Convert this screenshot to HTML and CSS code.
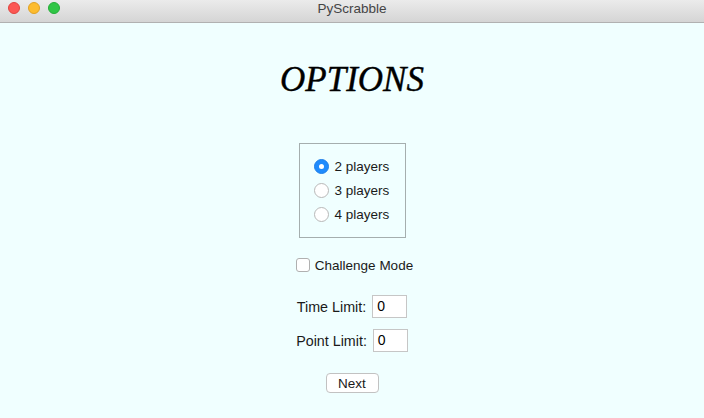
FILE: index.html
```html
<!DOCTYPE html>
<html>
<head>
<meta charset="utf-8">
<title>PyScrabble</title>
<link rel="stylesheet" href="styles.css">
</head>
<body>
<div class="titlebar">
  <div class="lights">
    <span class="light red"></span>
    <span class="light yellow"></span>
    <span class="light green"></span>
  </div>
  <div class="wintitle">PyScrabble</div>
</div>
<main class="content">
  <h1 class="heading">OPTIONS</h1>
  <div class="frame">
    <label class="radio-row"><span class="radio checked"></span><span>2 players</span></label>
    <label class="radio-row"><span class="radio"></span><span>3 players</span></label>
    <label class="radio-row"><span class="radio"></span><span>4 players</span></label>
  </div>
  <label class="check-row"><span class="checkbox"></span><span>Challenge Mode</span></label>
  <div class="field-row first"><span class="field-label">Time Limit:</span><span class="entry">0</span></div>
  <div class="field-row"><span class="field-label">Point Limit:</span><span class="entry">0</span></div>
  <button class="btn">Next</button>
</main>
</body>
</html>
```

FILE: styles.css
```css
html, body {
  margin: 0;
  padding: 0;
}
body {
  width: 704px;
  height: 418px;
  background: #f0ffff;
  font-family: "Liberation Sans", Arial, sans-serif;
  font-size: 13px;
  color: #1a1a1a;
  overflow: hidden;
}
.titlebar {
  height: 22px;
  background: linear-gradient(#ebebeb, #d5d5d5);
  border-bottom: 1px solid #b1b1b1;
  display: flex;
  align-items: center;
  justify-content: center;
  position: relative;
}
.lights {
  position: absolute;
  left: 8px;
  top: 2px;
  display: flex;
  gap: 8px;
}
.light {
  width: 12px;
  height: 12px;
  box-sizing: border-box;
  border-radius: 50%;
  display: block;
}
.red { background: #fc5753; border: 1px solid #e0443f; }
.yellow { background: #fdbc2e; border: 1px solid #e0a224; }
.green { background: #30c646; border: 1px solid #25ad38; }
.wintitle {
  color: #444;
  font-size: 13.5px;
  margin-top: -6px;
}
.content {
  display: flex;
  flex-direction: column;
  align-items: center;
}
.heading {
  margin: 37px 0 0;
  font-family: "Liberation Serif", "Times New Roman", serif;
  font-style: italic;
  font-weight: normal;
  font-size: 35px;
  line-height: 40px;
  color: #000;
  -webkit-text-stroke: 0.4px #000;
}
.frame {
  margin-top: 43px;
  width: 91px;
  height: 72px;
  padding: 10px 0 11px 14px;
  border: 1px solid #a5aeae;
  display: flex;
  flex-direction: column;
  font-size: 13.5px;
}
.radio-row {
  height: 24px;
  display: flex;
  align-items: center;
  gap: 6px;
}
.radio {
  width: 13px;
  height: 13px;
  border-radius: 50%;
  border: 1px solid #b8b8b8;
  background: #fff;
  display: block;
  position: relative;
}
.radio.checked {
  background: #1f8bfd;
  border-color: #1f7fe8;
}
.radio.checked::after {
  content: "";
  position: absolute;
  left: 4px;
  top: 4px;
  width: 5px;
  height: 5px;
  border-radius: 50%;
  background: #fff;
}
.check-row {
  margin-top: 18px;
  height: 18px;
  display: flex;
  align-items: center;
  gap: 5px;
  margin-left: 5px;
  font-size: 13.5px;
}
.checkbox {
  width: 12px;
  height: 12px;
  border: 1px solid #b0b0b0;
  border-radius: 3px;
  background: #fff;
  display: block;
}
.field-row {
  margin-top: 11px;
  display: flex;
  align-items: center;
  gap: 6px;
}
.field-row.first {
  margin-top: 21px;
}
.field-label {
  font-size: 14.3px;
}
.entry {
  width: 29px;
  height: 21px;
  border: 1px solid #c6c6c6;
  background: #fff;
  padding-left: 4px;
  line-height: 21px;
  color: #000;
  font-size: 14px;
}
.btn {
  margin-top: 21px;
  width: 53px;
  height: 20px;
  border: 1px solid #c2c2c2;
  border-radius: 4px;
  background: #fff;
  font-family: "Liberation Sans", Arial, sans-serif;
  font-size: 13.5px;
  color: #1a1a1a;
  padding: 0;
}
```
